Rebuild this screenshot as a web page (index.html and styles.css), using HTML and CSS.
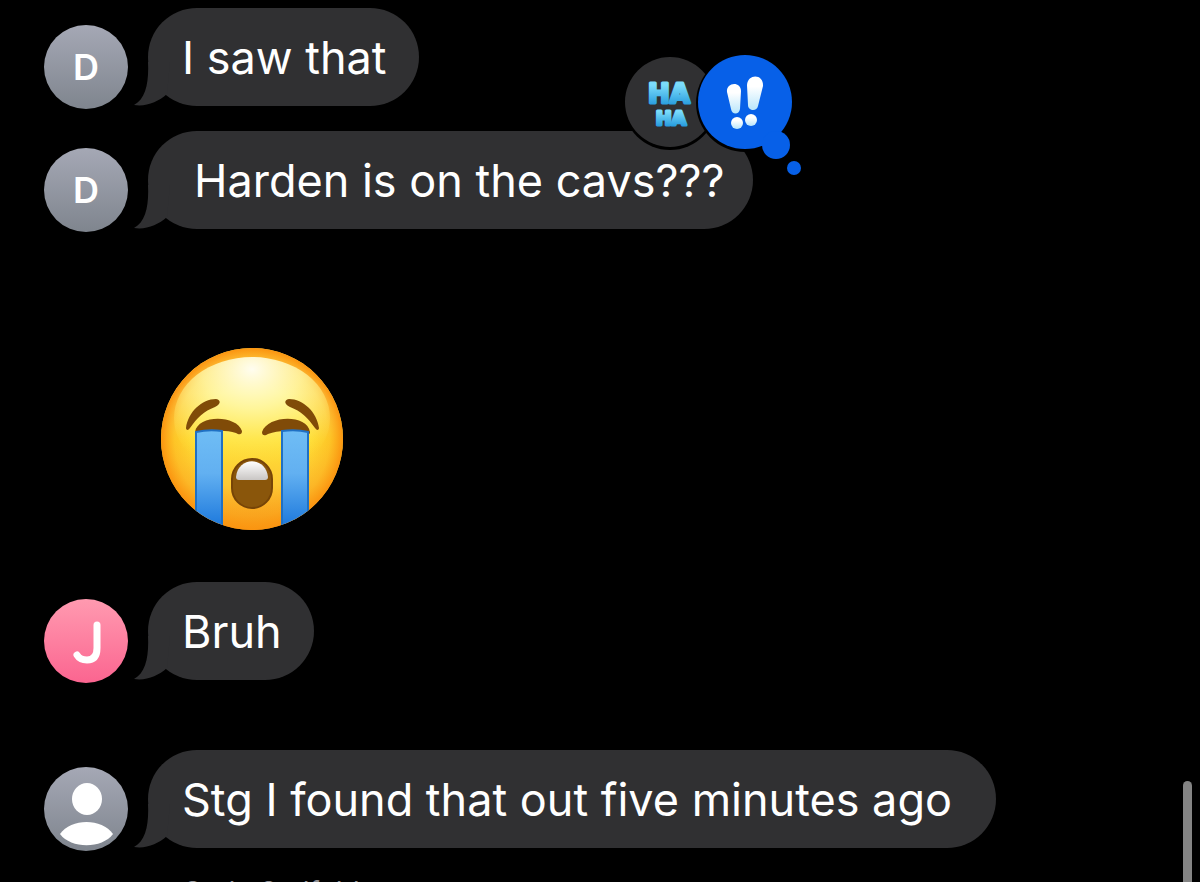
FILE: index.html
```html
<!DOCTYPE html>
<html lang="en">
  <head>
    <meta charset="UTF-8" />
    <meta name="viewport" content="width=device-width, initial-scale=1.0" />
    <title>Messages</title>
    <link rel="stylesheet" href="styles.css">
  </head>
  <body>
    <main class="chat">
      <div class="message">
        <div class="avatar">D</div>
        <div class="bubble">
          I saw that
          <svg class="tail" viewBox="0 0 36 44"><path d="M14 0 C15 20 12 37 0 43 C12 45 24 40 33 32 L36 0 Z" /></svg>
        </div>
      </div>
      <div class="message">
        <div class="avatar">D</div>
        <div class="bubble reacted">
          Harden is on the cavs???
          <svg class="tail" viewBox="0 0 36 44"><path d="M14 0 C15 20 12 37 0 43 C12 45 24 40 33 32 L36 0 Z" /></svg>
          <svg class="reactions" viewBox="0 0 190 130" role="img" aria-label="Haha and emphasis reactions">
            <defs>
              <linearGradient id="haha" x1="0" y1="0" x2="0" y2="1">
                <stop offset="0.2" stop-color="#7bdcfb" />
                <stop offset="0.9" stop-color="#2399dc" />
              </linearGradient>
              <linearGradient id="mark" x1="0" y1="0" x2="0" y2="1">
                <stop offset="0.3" stop-color="#ffffff" />
                <stop offset="1" stop-color="#b9e6fb" />
              </linearGradient>
            </defs>
            <circle cx="50" cy="53" r="47" fill="#000" />
            <circle cx="50" cy="52" r="45" fill="#303032" />
            <g class="haha">
              <text x="49" y="53" font-size="26">HA</text>
              <text x="51" y="75" font-size="19">HA</text>
            </g>
            <circle cx="125" cy="53" r="49" fill="#000" />
            <g fill="#0760e8">
              <circle cx="125" cy="52" r="47" />
              <circle cx="156" cy="95" r="14" />
              <circle cx="174" cy="118" r="7" />
            </g>
            <g fill="url(#mark)">
              <path d="M107 42 C106 32 121 31 121 41 L120 59 C119 65 112 65 111 59 Z" />
              <path d="M127 35 C128 23 144 24 143 36 L138 56 C137 62 128 61 128 55 Z" />
              <circle cx="117" cy="73" r="6" />
              <circle cx="131" cy="70" r="6" />
            </g>
          </svg>
        </div>
      </div>
      <div class="emoji-message">
        <svg class="emoji" viewBox="0 0 183 183" role="img" aria-label="Loudly crying face">
          <defs>
            <linearGradient id="face" x1="0" y1="0" x2="0" y2="1">
              <stop offset="0" stop-color="#ffd84a" />
              <stop offset="0.25" stop-color="#fff07a" />
              <stop offset="0.5" stop-color="#ffe135" />
              <stop offset="0.75" stop-color="#fdc834" />
              <stop offset="1" stop-color="#f79a1e" />
            </linearGradient>
            <radialGradient id="edge" cx="0.5" cy="0.5" r="0.5">
              <stop offset="0.6" stop-color="#fb9d12" stop-opacity="0" />
              <stop offset="0.85" stop-color="#fb9d12" stop-opacity="0.4" />
              <stop offset="1" stop-color="#fb9410" />
            </radialGradient>
            <radialGradient id="shine" cx="0.5" cy="0.1" r="0.8">
              <stop offset="0" stop-color="#fffdf0" />
              <stop offset="0.4" stop-color="#fff8a8" stop-opacity="0.8" />
              <stop offset="1" stop-color="#ffe84a" stop-opacity="0" />
            </radialGradient>
            <linearGradient id="tears" x1="0" y1="0" x2="0" y2="1">
              <stop offset="0" stop-color="#6fbdf5" />
              <stop offset="0.4" stop-color="#62b0f1" />
              <stop offset="0.9" stop-color="#1c78dc" />
            </linearGradient>
            <linearGradient id="teeth" x1="0" y1="0" x2="0" y2="1">
              <stop offset="0" stop-color="#ffffff" />
              <stop offset="1" stop-color="#c9c6c4" />
            </linearGradient>
            <clipPath id="head"><circle cx="91" cy="91" r="91" /></clipPath>
          </defs>
          <circle cx="91" cy="91" r="91" fill="url(#face)" />
          <circle cx="91" cy="91" r="91" fill="url(#edge)" />
          <ellipse cx="91" cy="70" rx="78" ry="61" fill="url(#shine)" />
          <g fill="#804b08">
            <path d="M25 80 C27 64 41 51 55 51 C61 52 59 57 54 59 C43 63 36 70 29 80 C27 83 25 82 25 80 Z" />
            <path d="M158 80 C156 64 142 51 128 51 C122 52 124 57 129 59 C140 63 147 70 154 80 C156 83 158 82 158 80 Z" />
            <path d="M34 84 C37 66 76 67 81 83 C81 87 78 87 75 85 C63 81 48 83 38 86 C35 87 34 86 34 84 Z" />
            <path d="M149 84 C146 66 107 67 101 84 C101 88 104 88 107 86 C119 81 135 83 145 86 C148 87 149 86 149 84 Z" />
          </g>
          <g clip-path="url(#head)" fill="url(#tears)" stroke="#1f70c4" stroke-width="2">
            <path d="M35 84 Q48 81 61 83 V190 H35 Z" />
            <path d="M121 83 Q135 81 147 84 V190 H121 Z" />
          </g>
          <rect x="71" y="111" width="40" height="49" rx="20" fill="#8a560b" stroke="#764407" stroke-width="2" />
          <path d="M75 129 C77 108 105 108 107 129 Q107 132 104 132 H78 Q75 132 75 129 Z" fill="url(#teeth)" />
        </svg>
      </div>
      <div class="message">
        <div class="avatar pink">
          <svg class="initial" viewBox="0 0 84 84" role="img" aria-label="J"><path d="M53 26 V49 Q53 61 43 61 Q36 61 33 56" /></svg>
        </div>
        <div class="bubble">
          Bruh
          <svg class="tail" viewBox="0 0 36 44"><path d="M14 0 C15 20 12 37 0 43 C12 45 24 40 33 32 L36 0 Z" /></svg>
        </div>
      </div>
      <div class="message new-sender">
        <div class="avatar">
          <svg class="person" viewBox="0 0 84 84" role="img" aria-label="Unknown contact">
            <ellipse cx="43" cy="32" rx="15" ry="16" />
            <path d="M16 67 C27 51 58 51 69 67 C58 82 27 82 16 67 Z" />
          </svg>
        </div>
        <div class="bubble long">
          Stg I found that out five minutes ago
          <svg class="tail" viewBox="0 0 36 44"><path d="M14 0 C15 20 12 37 0 43 C12 45 24 40 33 32 L36 0 Z" /></svg>
        </div>
      </div>
      <div class="sender">Cade Stelfold</div>
    </main>
    <div class="scrollbar"></div>
  </body>
</html>
```
FILE: styles.css
```css
* {
  box-sizing: border-box;
}
body {
  margin: 0;
  height: 100vh;
  overflow: hidden;
  background-color: #000;
  color: #fff;
  font-family: Inter, "Liberation Sans", sans-serif;
}
.chat {
  padding: 8px 24px 0 44px;
}
.message {
  display: flex;
  align-items: flex-end;
  gap: 20px;
  margin-bottom: 25px;
}
.avatar {
  flex: none;
  display: flex;
  align-items: center;
  justify-content: center;
  width: 84px;
  height: 84px;
  margin-bottom: -3px;
  border-radius: 50%;
  background: linear-gradient(#a5a8b5, #7f858e);
  font-size: 36px;
  font-weight: 600;
}
.pink {
  background: linear-gradient(#ff9ab0, #fb6590);
}
.initial {
  width: 84px;
  fill: none;
  stroke: #fff;
  stroke-width: 7;
  stroke-linecap: round;
}
.person {
  width: 84px;
  fill: #fff;
}
.bubble {
  position: relative;
  padding: 22px 32px 20px 34px;
  border-radius: 49px;
  background-color: #303032;
  font-size: 45px;
  line-height: 56px;
}
.reacted {
  padding-left: 46px;
  padding-right: 28px;
}
.long {
  padding-right: 44px;
}
.tail {
  position: absolute;
  left: -14px;
  bottom: 0;
  width: 36px;
  height: 44px;
  fill: #303032;
}
.reactions {
  position: absolute;
  top: -81px;
  right: -57px;
  width: 190px;
  height: 130px;
}
.haha {
  fill: url(#haha);
  stroke: url(#haha);
  stroke-width: 3;
  stroke-linejoin: round;
  font-family: "DejaVu Sans", sans-serif;
  font-weight: 700;
  line-height: 20px;
  text-anchor: middle;
}
.emoji-message {
  padding: 94px 0 51px 117px;
}
.emoji {
  display: block;
  width: 183px;
  height: 183px;
}
.new-sender {
  margin-top: 70px;
}
.sender {
  margin-left: 138px;
  color: #8e8e93;
  font-size: 28px;
  line-height: 38px;
}
.scrollbar {
  position: fixed;
  right: 8px;
  bottom: -40px;
  width: 9px;
  height: 141px;
  border-radius: 5px;
  background-color: #848484;
}
```
